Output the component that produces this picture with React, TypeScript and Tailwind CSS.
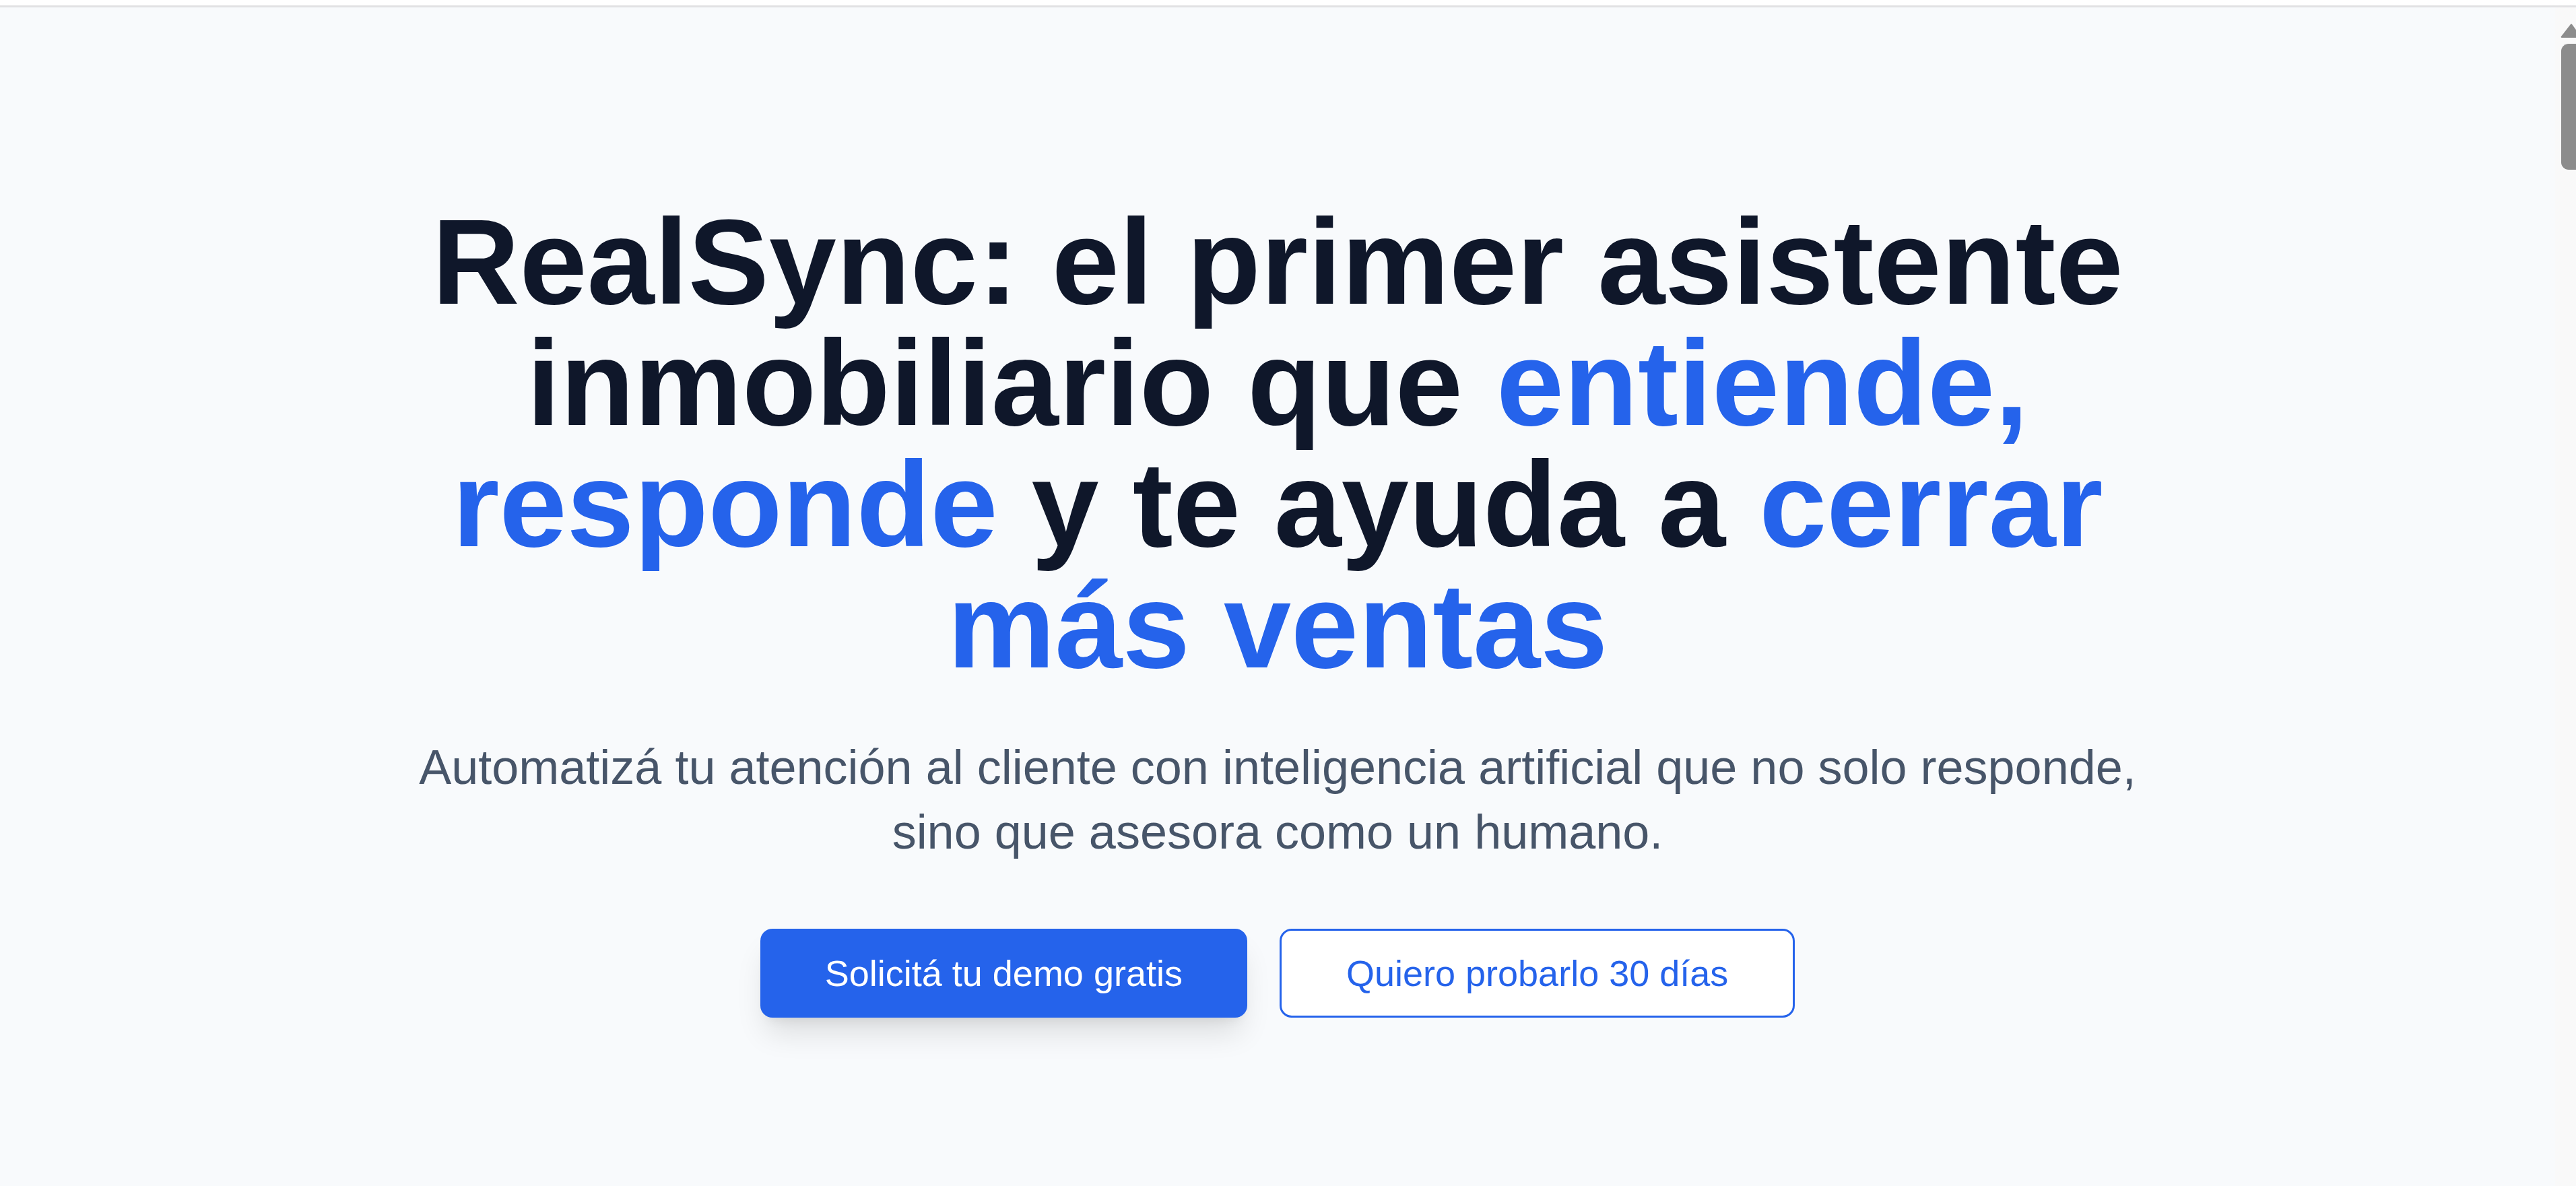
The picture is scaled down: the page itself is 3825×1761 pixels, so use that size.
import React from "react";

export default function App() {
  return (
    <div className="w-full h-[1761px] flex flex-col bg-white overflow-hidden" style={{ fontFamily: '"Liberation Sans", Arial, sans-serif' }}>
      <div className="h-[8px] bg-white shrink-0" />
      <div className="h-[3px] bg-[#e1e1e3] shrink-0" />
      <div className="flex flex-1 min-h-0">
        <main className="flex-1 bg-[#f8fafc] flex flex-col items-center pt-[288px]">
          <div className="max-w-[2640px] w-full flex flex-col items-center text-center">
            <h1 className="text-[180px] leading-[180px] font-bold text-[#0f172a] mb-[72px]">
              RealSync: el primer asistente inmobiliario que{" "}
              <span className="text-[#2563eb]">entiende, responde</span> y te ayuda a{" "}
              <span className="text-[#2563eb]">cerrar más ventas</span>
            </h1>
            <p className="text-[72px] leading-[96px] text-[#475569] mb-[96px]">
              Automatizá tu atención al cliente con inteligencia artificial que no solo responde, sino que asesora como un humano.
            </p>
            <div className="flex gap-[48px] items-center">
              <button className="bg-[#2563eb] text-white text-[54px] leading-[84px] px-[96px] py-[24px] rounded-[18px] shadow-[0_30px_45px_-9px_rgba(0,0,0,0.12),0_12px_18px_-12px_rgba(0,0,0,0.1)]">
                Solicitá tu demo gratis
              </button>
              <button className="bg-white border-[3px] border-[#2563eb] text-[#2563eb] text-[54px] leading-[84px] px-[96px] py-[21px] rounded-[18px]">
                Quiero probarlo 30 días
              </button>
            </div>
          </div>
        </main>
        <div className="w-[31px] shrink-0 bg-[#f9f9f9] relative overflow-hidden">
          <svg className="absolute left-0 top-[22px]" width="31" height="26" viewBox="0 0 31 26">
            <path d="M23 3 Q24 2 25 3 L38 21 Q39 23 37 23 L10 23 Q8 23 9 21 Z" fill="#8c8c8c" />
          </svg>
          <div className="absolute left-[9px] top-[54px] w-[34px] h-[187px] rounded-[11px] bg-[#8c8c8c]" />
        </div>
      </div>
    </div>
  );
}
